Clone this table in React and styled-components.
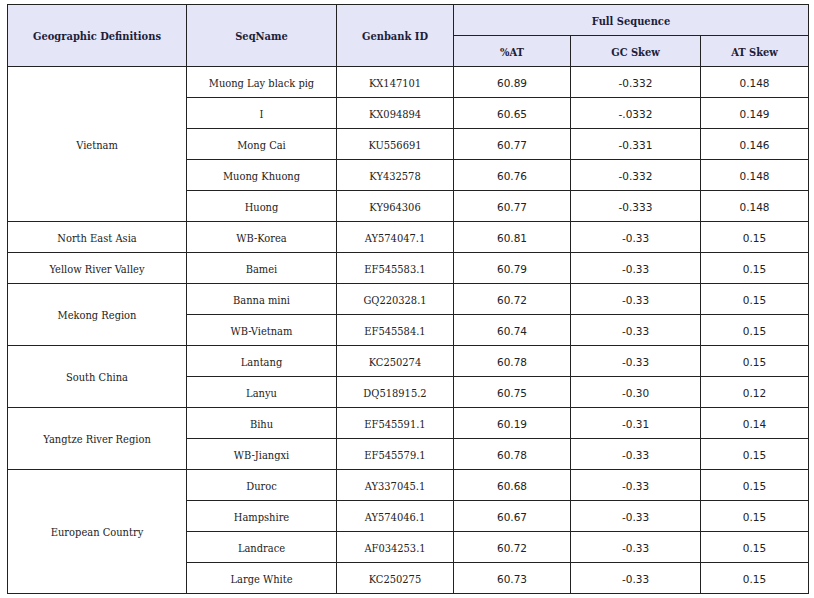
import React from 'react';
import styled, { createGlobalStyle } from 'styled-components';

const GlobalStyle = createGlobalStyle`
  body {
    margin: 0;
    background: #fff;
    font-family: "DejaVu Serif", serif;
  }
`;

const Wrap = styled.div`
  padding: 4px 0 0 7px;
`;

const Table = styled.table`
  width: 801px;
  border-collapse: collapse;
  table-layout: fixed;
  font-size: 11px;
  color: #222;
`;

const serif = '"DejaVu Serif Condensed", "DejaVu Serif", serif';

const HeadCell = styled.th`
  background: #e4e5f7;
  color: #1d1d3a;
  font-family: ${serif};
  font-stretch: condensed;
  font-weight: bold;
  border: 1px solid #222;
  text-align: center;
  vertical-align: middle;
  padding: 2px 0 0;
  height: 28px;
`;

const Cell = styled.td`
  border: 1px solid #222;
  text-align: center;
  vertical-align: middle;
  padding: 2px 0 0;
  height: 28px;
  font-family: ${(p) => (p.$num ? '"DejaVu Sans", sans-serif' : serif)};
  font-stretch: ${(p) => (p.$num ? 'normal' : 'condensed')};
  font-size: ${(p) => (p.$num ? '10.5px' : '11px')};
`;

const groups = [
  {
    region: 'Vietnam',
    rows: [
      ['Muong Lay black pig', 'KX147101', '60.89', '-0.332', '0.148'],
      ['I', 'KX094894', '60.65', '-.0332', '0.149'],
      ['Mong Cai', 'KU556691', '60.77', '-0.331', '0.146'],
      ['Muong Khuong', 'KY432578', '60.76', '-0.332', '0.148'],
      ['Huong', 'KY964306', '60.77', '-0.333', '0.148'],
    ],
  },
  { region: 'North East Asia', rows: [['WB-Korea', 'AY574047.1', '60.81', '-0.33', '0.15']] },
  { region: 'Yellow River Valley', rows: [['Bamei', 'EF545583.1', '60.79', '-0.33', '0.15']] },
  {
    region: 'Mekong Region',
    rows: [
      ['Banna mini', 'GQ220328.1', '60.72', '-0.33', '0.15'],
      ['WB-Vietnam', 'EF545584.1', '60.74', '-0.33', '0.15'],
    ],
  },
  {
    region: 'South China',
    rows: [
      ['Lantang', 'KC250274', '60.78', '-0.33', '0.15'],
      ['Lanyu', 'DQ518915.2', '60.75', '-0.30', '0.12'],
    ],
  },
  {
    region: 'Yangtze River Region',
    rows: [
      ['Bihu', 'EF545591.1', '60.19', '-0.31', '0.14'],
      ['WB-Jiangxi', 'EF545579.1', '60.78', '-0.33', '0.15'],
    ],
  },
  {
    region: 'European Country',
    rows: [
      ['Duroc', 'AY337045.1', '60.68', '-0.33', '0.15'],
      ['Hampshire', 'AY574046.1', '60.67', '-0.33', '0.15'],
      ['Landrace', 'AF034253.1', '60.72', '-0.33', '0.15'],
      ['Large White', 'KC250275', '60.73', '-0.33', '0.15'],
    ],
  },
];

export default function App() {
  return (
    <>
      <GlobalStyle />
      <Wrap>
        <Table>
          <colgroup>
            <col style={{ width: 179 }} />
            <col style={{ width: 150 }} />
            <col style={{ width: 117 }} />
            <col style={{ width: 117 }} />
            <col style={{ width: 130 }} />
            <col style={{ width: 108 }} />
          </colgroup>
          <thead>
            <tr>
              <HeadCell rowSpan={2}>Geographic Definitions</HeadCell>
              <HeadCell rowSpan={2}>SeqName</HeadCell>
              <HeadCell rowSpan={2}>Genbank ID</HeadCell>
              <HeadCell colSpan={3}>Full Sequence</HeadCell>
            </tr>
            <tr>
              <HeadCell>%AT</HeadCell>
              <HeadCell>GC Skew</HeadCell>
              <HeadCell>AT Skew</HeadCell>
            </tr>
          </thead>
          <tbody>
            {groups.map((g) =>
              g.rows.map((r, i) => (
                <tr key={g.region + i}>
                  {i === 0 && <Cell rowSpan={g.rows.length}>{g.region}</Cell>}
                  <Cell>{r[0]}</Cell>
                  <Cell>{r[1]}</Cell>
                  <Cell $num>{r[2]}</Cell>
                  <Cell $num>{r[3]}</Cell>
                  <Cell $num>{r[4]}</Cell>
                </tr>
              ))
            )}
          </tbody>
        </Table>
      </Wrap>
    </>
  );
}
